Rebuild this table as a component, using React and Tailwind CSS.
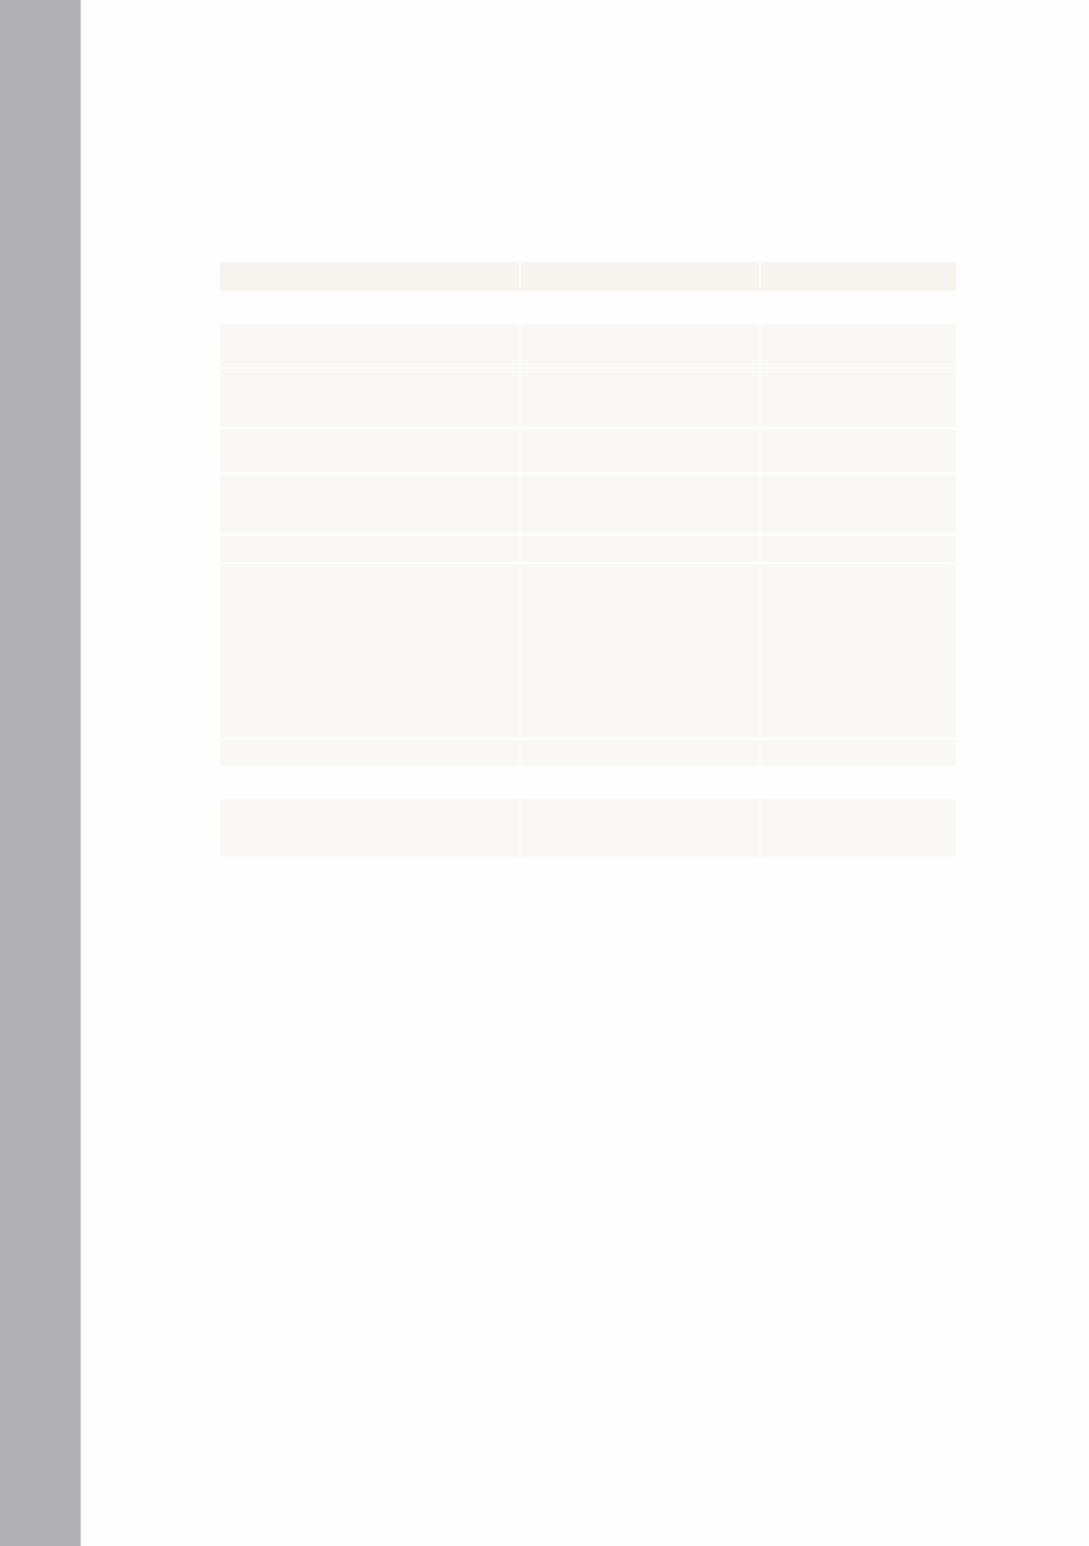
export default function App() {
  const rows = [
    { mt: "mt-[33px]", h: "h-[43px]" },
    { mt: "mt-[2px]", h: "h-[58px]" },
    { mt: "mt-[3px]", h: "h-[42px]" },
    { mt: "mt-[3px]", h: "h-[58px]" },
    { mt: "mt-[3px]", h: "h-[26px]" },
    { mt: "mt-[2px]", h: "h-[173px]" },
    { mt: "mt-[3px]", h: "h-[26px]" },
    { mt: "mt-[33px]", h: "h-[58px]" },
  ];
  return (
    <div className="flex min-h-[1546px] w-full bg-[#fefefe]" style={{ fontFamily: '"Liberation Sans", sans-serif' }}>
      <aside className="w-[81px] shrink-0 bg-[#b0b0b2] border-r border-[#c9c9cb]" />
      <main className="flex-1 pl-[139px] pt-[262px]">
        <div className="flex w-[736px] flex-col">
          <div className="flex h-[29px] gap-[2px]">
            <div className="w-[299px] bg-[#f7f4ef]" />
            <div className="w-[238px] bg-[#f7f4ef]" />
            <div className="flex-1 bg-[#f7f4ef]" />
          </div>
          {rows.map((r, i) => (
            <div key={i} className={`flex gap-[2px] ${r.mt} ${r.h}`}>
              <div className="w-[299px] bg-[#f9f8f5]" />
              <div className="w-[238px] bg-[#f9f8f5]" />
              <div className="flex-1 bg-[#f9f8f5]" />
            </div>
          ))}
        </div>
      </main>
    </div>
  );
}
